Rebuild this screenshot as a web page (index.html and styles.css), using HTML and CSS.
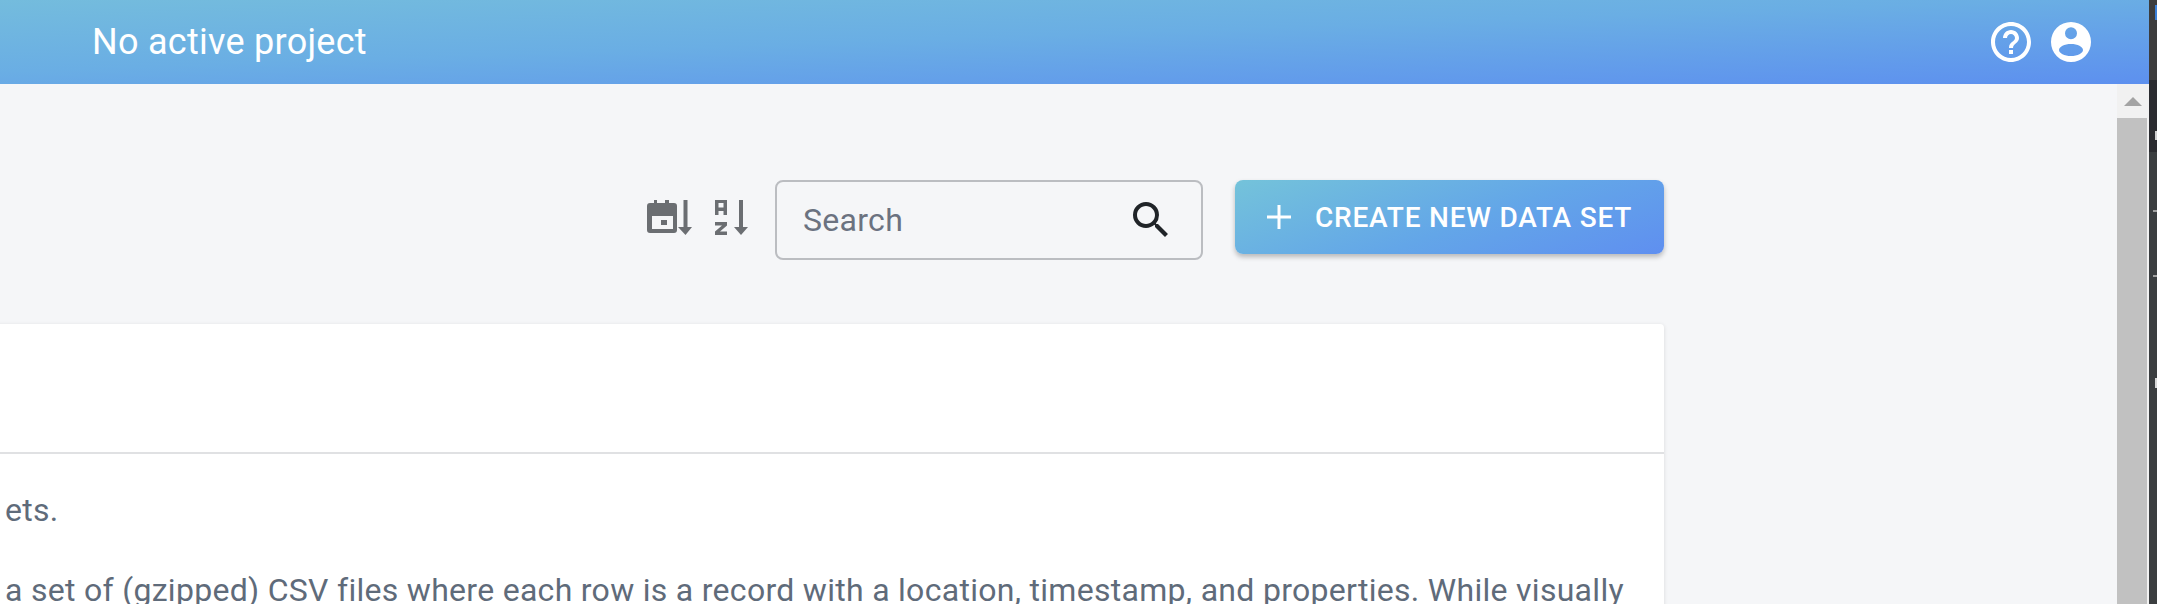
FILE: index.html
```html
<!DOCTYPE html>
<html lang="en">
<head>
<meta charset="utf-8">
<title>Data sets</title>
<link rel="stylesheet" href="styles.css">
</head>
<body>
<div class="window">
  <div class="app">
    <header class="topbar">
      <span class="project">No active project</span>
      <div class="top-icons">
        <svg class="top-icon" viewBox="0 0 24 24"><path d="M11 18h2v-2h-2v2zm1-16C6.48 2 2 6.48 2 12s4.48 10 10 10 10-4.48 10-10S17.52 2 12 2zm0 18c-4.41 0-8-3.59-8-8s3.59-8 8-8 8 3.59 8 8-3.59 8-8 8zm0-14c-2.21 0-4 1.79-4 4h2c0-1.1.9-2 2-2s2 .9 2 2c0 2-3 1.75-3 5h2c0-2.25 3-2.5 3-5 0-2.21-1.79-4-4-4z"/></svg>
        <svg class="top-icon" viewBox="0 0 24 24"><path fill-rule="evenodd" d="M12 2a10 10 0 1 0 0 20 10 10 0 0 0 0-20zm0 2.600a3 3 0 1 1 0 6 3 3 0 0 1 0-6zm0 8.400c3.300 0 6 1.350 6 3s-2.700 3-6 3-6-1.350-6-3 2.700-3 6-3z"/></svg>
      </div>
    </header>
    <div class="main">
      <div class="content">
        <div class="toolbar">
          <svg class="sort-icon sort-date" viewBox="0 0 45 36"><path fill-rule="evenodd" d="M7 0h3v3h8V0h4v3h5a3 3 0 0 1 3 3v24a3 3 0 0 1-3 3H3a3 3 0 0 1-3-3V6a3 3 0 0 1 3-3h4zM5 16v13h21V16zm9 4h6v5h-6z"/><path d="M36.500 0h4v27H45l-6.500 8-7.500-8h5.500z"/></svg>
          <svg class="sort-icon sort-alpha" viewBox="0 0 33 36"><path fill-rule="evenodd" d="M0 0h12v15H8.500v-4h-5v4H0zm3.500 3v4.500h5V3zM0 22h12v3.500L5 31.500h7V35H0v-3.500L7 25.500H0z"/><path d="M24 0h4v27h5l-7 8-7-8h5z"/></svg>
          <label class="search">
            <span class="search-text">Search</span>
            <svg class="search-icon" viewBox="0 0 24 24"><path d="M15.500 14h-.79l-.28-.27A6.470 6.470 0 0 0 16 9.500 6.500 6.500 0 1 0 9.500 16c1.610 0 3.090-.59 4.230-1.570l.27.28v.79l5 4.990L20.490 19l-4.990-5zm-6 0C7.010 14 5 11.990 5 9.500S7.010 5 9.500 5 14 7.010 14 9.500 11.990 14 9.500 14z"/></svg>
          </label>
          <button class="create">
            <svg class="plus" viewBox="0 0 24 24"><path d="M10.500 0h3v10.500H24v3H13.500V24h-3V13.500H0v-3h10.500z"/></svg>
            <span>CREATE NEW DATA SET</span>
          </button>
        </div>
        <section class="card">
          <div class="card-head"></div>
          <div class="card-body">
            <p>ets.</p>
            <p>a set of (gzipped) CSV files where each row is a record with a location, timestamp, and properties. While visually</p>
          </div>
        </section>
      </div>
    </div>
  </div>
  <div class="scrollbar">
    <div class="scroll-up"><span class="arrow"></span></div>
    <div class="scroll-thumb"></div>
  </div>
  <div class="edge"></div>
</div>
</body>
</html>
```
FILE: styles.css
```css
* { box-sizing: border-box; }
html, body { margin: 0; height: 100%; overflow: hidden; }
body { font-family: Roboto, "Liberation Sans", sans-serif; background: #f5f6f8; }
.window { position: relative; height: 604px; width: 2157px; overflow: hidden; }
.app { width: 2149px; height: 604px; display: flex; flex-direction: column; }
.topbar {
  height: 84px;
  flex: none;
  display: flex;
  align-items: center;
  justify-content: space-between;
  padding: 0 54px 0 92px;
  color: #fff;
  background: linear-gradient(178deg, #74bcdd 0%, #6aaee4 45%, #5d90ef 100%);
}
.project { font-size: 36px; line-height: 1; letter-spacing: .27px; }
.top-icons { display: flex; gap: 12px; }
.top-icon { width: 48px; height: 48px; fill: #fff; display: block; }
.main { flex: 1; overflow: hidden; padding-right: 485px; }
.toolbar {
  height: 240px;
  padding-top: 96px;
  display: flex;
  justify-content: flex-end;
  align-items: flex-start;
}
.sort-icon { height: 36px; fill: #6b6e72; margin-top: 20px; display: block; }
.sort-date { width: 45px; margin-right: 23px; }
.sort-alpha { width: 33px; margin-right: 27px; }
.search {
  width: 428px;
  height: 80px;
  border: 2px solid #bbbdc1;
  border-radius: 8px;
  display: flex;
  align-items: center;
  justify-content: space-between;
  padding: 0 26px 0 26px;
}
.search-text { font-size: 32px; letter-spacing: .3px; color: #6b7280; }
.search-icon { width: 48px; height: 48px; fill: #202428; }
.create {
  width: 429px;
  height: 74px;
  margin-left: 32px;
  border: 0;
  border-radius: 8px;
  color: #fff;
  font: 500 28px Roboto, "Liberation Sans", sans-serif;
  letter-spacing: .8px;
  display: flex;
  align-items: center;
  padding: 0 0 0 32px;
  gap: 24px;
  background: linear-gradient(160deg, #74c3da 0%, #63a6e8 55%, #5f8ff0 100%);
  box-shadow: 0 3px 5px rgba(0, 0, 0, .25);
}
.plus { width: 24px; height: 24px; fill: #fff; flex: none; }
.card {
  background: #fff;
  border-radius: 0 4px 0 0;
  margin-left: -8px;
  height: 400px;
  box-shadow: 0 1px 4px rgba(0, 0, 0, .12);
}
.card-head { height: 130px; border-bottom: 2px solid #e0e1e3; }
.card-body {
  padding: 32px 0 0 13px;
  color: #5f6b7a;
  font-size: 32px;
  letter-spacing: .29px;
  line-height: 48px;
  white-space: nowrap;
}
.card-body p { margin: 0 0 32px; }
.scrollbar {
  position: absolute;
  top: 84px;
  right: 8px;
  bottom: 0;
  width: 32px;
  background: #f1f1f1;
}
.scroll-up { height: 34px; display: flex; align-items: center; justify-content: center; }
.arrow { width: 0; height: 0; border-left: 9px solid transparent; border-right: 9px solid transparent; border-bottom: 9px solid #a3a3a3; }
.scroll-thumb { height: 520px; margin-right: 2px; background: #c1c1c1; }
.edge {
  position: absolute;
  top: 0;
  right: 0;
  bottom: 0;
  width: 8px;
  background-color: #3b3e40;
  background-image:
    linear-gradient(#3a7fd8, #3a7fd8),
    linear-gradient(#d0d0d0, #d0d0d0),
    linear-gradient(#a0a0a0, #a0a0a0),
    linear-gradient(#a0a0a0, #a0a0a0),
    linear-gradient(#d8d8d8, #d8d8d8),
    linear-gradient(#2b2c30, #2b2c30),
    linear-gradient(#3c3c3d, #3c3c3d);
  background-repeat: no-repeat;
  background-size: 2px 15px, 2px 9px, 4px 2px, 4px 2px, 2px 10px, 8px 72px, 8px 80px;
  background-position: 6px 5px, 6px 131px, 4px 210px, 4px 275px, 6px 378px, 0 80px, 0 0;
}
```
